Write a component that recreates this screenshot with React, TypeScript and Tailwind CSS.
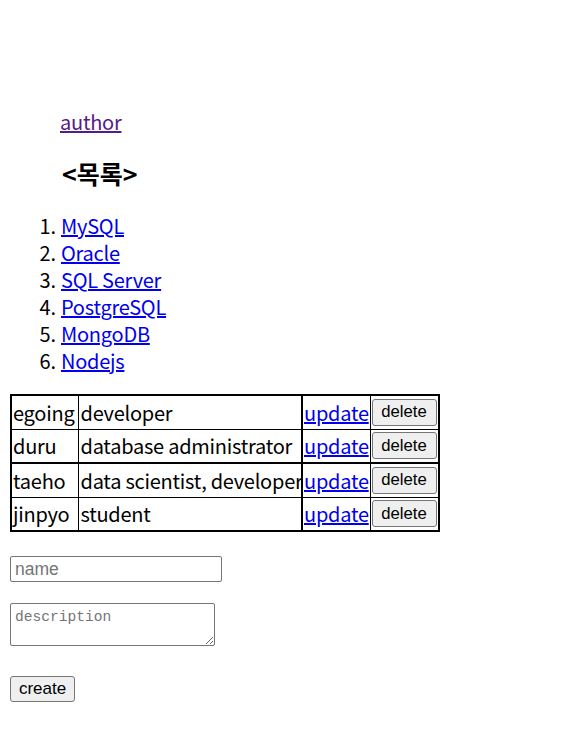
import React from "react";

const rows = [
  { name: "egoing", desc: "developer", thick: false },
  { name: "duru", desc: "database administrator", thick: true },
  { name: "taeho", desc: "data scientist, developer", thick: false },
  { name: "jinpyo", desc: "student", thick: false },
];

const items = ["MySQL", "Oracle", "SQL Server", "PostgreSQL", "MongoDB", "Nodejs"];

export default function App() {
  return (
    <div
      className="bg-white text-black text-[20px] leading-[27px] tracking-[-0.25px] min-h-[729px]"
      style={{ fontFamily: '"Noto Sans CJK KR", "Noto Sans", sans-serif' }}
    >
      <div className="pl-[60px] pt-[108px]">
        <a href="#" className="text-[#551a8b] underline block h-[27px] w-fit">author</a>
        <h3 className="mt-[23px] pl-[2px] text-[25px] leading-[31px] font-bold tracking-normal">&lt;목록&gt;</h3>
      </div>
      <ol className="list-decimal mt-[23px] pl-[60px]">
        {items.map((it) => (
          <li key={it} className="h-[27px] pl-[1px]">
            <a href="#" className="text-[#0000ee] underline">{it}</a>
          </li>
        ))}
      </ol>
      <table className="ml-[10px] mt-[20px] border-collapse border-2 border-black table-fixed w-[428px]">
        <colgroup>
          <col className="w-[67px]" />
          <col className="w-[224px]" />
          <col className="w-[68px]" />
          <col className="w-[69px]" />
        </colgroup>
        <tbody>
          {rows.map((r, i) => (
            <tr
              key={r.name}
              className={
                i < rows.length - 1
                  ? r.thick
                    ? "border-b-2 border-black"
                    : "border-b border-black"
                  : ""
              }
            >
              <td className="h-[34px] px-[1px] border-r border-black whitespace-nowrap overflow-hidden">{r.name}</td>
              <td className="h-[34px] px-[2px] border-r-2 border-black whitespace-nowrap overflow-hidden">{r.desc}</td>
              <td className="h-[34px] px-[1px] border-r border-black whitespace-nowrap overflow-hidden">
                <a href="#" className="text-[#0000ee] underline">update</a>
              </td>
              <td className="h-[34px] px-[1px]">
                <button
                  className="block w-[65px] h-[27px] bg-[#efefef] border border-[#767676] rounded-[3px] text-[16.7px] leading-[20px] tracking-normal"
                  style={{ fontFamily: '"Liberation Sans", Arial, sans-serif' }}
                >
                  delete
                </button>
              </td>
            </tr>
          ))}
        </tbody>
      </table>
      <div className="pl-[10px] pt-[24px]">
        <input
          placeholder="name"
          className="block w-[212px] h-[26px] border border-[#767676] rounded-[2px] px-[4px] text-[17.5px] tracking-normal placeholder:text-[#757575]"
          style={{ fontFamily: '"Liberation Sans", Arial, sans-serif' }}
        />
        <textarea
          placeholder="description"
          className="block mt-[21px] w-[205px] h-[43px] border border-[#767676] rounded-[2px] px-[4px] pt-[4px] text-[14.6px] leading-[18px] tracking-normal placeholder:text-[#757575]"
          style={{ fontFamily: '"Liberation Mono", monospace' }}
        />
        <button
          className="block mt-[30px] w-[65px] h-[26px] bg-[#efefef] border border-[#767676] rounded-[3px] text-[17px] leading-[20px] tracking-normal"
          style={{ fontFamily: '"Liberation Sans", Arial, sans-serif' }}
        >
          create
        </button>
      </div>
    </div>
  );
}
